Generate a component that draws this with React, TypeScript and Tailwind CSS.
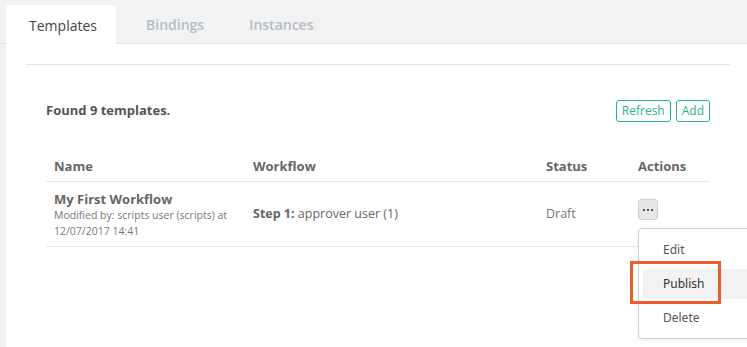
import React from 'react';

const tabs = ['Templates', 'Bindings', 'Instances'];

const App = () => {
  return (
    <div className="relative h-[347px] w-[747px] overflow-hidden bg-[#f2f2f2] font-['Open_Sans',sans-serif]">
      {/* Tab strip */}
      <div className="flex h-[44px] items-end border-b border-[#e2e2e2] pl-[6px]">
        <div className="-mb-px flex h-[39px] w-[110px] items-center justify-center rounded-t-[4px] bg-white pl-[4px] pt-[1px] text-[14px] text-[#444]">
          {tabs[0]}
        </div>
        <div className="flex h-[39px] items-center pl-[30px] pt-[1px] text-[14px] font-semibold text-[#b4bcc8]">{tabs[1]}</div>
        <div className="flex h-[39px] items-center pl-[45px] pt-[1px] text-[14px] font-semibold text-[#b4bcc8]">{tabs[2]}</div>
      </div>

      {/* Panel */}
      <div className="ml-[6px] h-[303px] bg-white pl-[20px] pr-[17px] pt-[20px]">
        <div className="border-t border-[#e3e7ec]" />

        <div className="px-[20px]">
          <div className="mt-[35px] flex items-center justify-between">
            <span className="text-[13px] font-bold text-[#555]">Found 9 templates.</span>
            <div className="flex gap-[5px]">
              <button className="h-[22px] rounded-[3px] border border-[#1fb58f] px-[5px] text-[12px] leading-none text-[#1fb58f]">Refresh</button>
              <button className="h-[22px] rounded-[3px] border border-[#1fb58f] px-[5px] text-[12px] leading-none text-[#1fb58f]">Add</button>
            </div>
          </div>

          {/* Table */}
          <div className="mt-[35px] grid grid-cols-[199px_293px_92px_80px] text-[#666]">
            <div className="border-b border-[#e6e6e6] px-[8px] pb-[4px] text-[13px] font-bold">Name</div>
            <div className="border-b border-[#e6e6e6] px-[8px] pb-[4px] text-[13px] font-bold">Workflow</div>
            <div className="border-b border-[#e6e6e6] px-[8px] pb-[4px] text-[13px] font-bold">Status</div>
            <div className="border-b border-[#e6e6e6] px-[8px] pb-[4px] text-[13px] font-bold">Actions</div>

            <div className="flex h-[65px] flex-col justify-center border-b border-[#e6e6e6] px-[8px] pt-[2px]">
              <div className="text-[13px] font-bold leading-[16px] text-[#666]">My First Workflow</div>
              <div className="text-[10.5px] leading-[16px] text-[#777]">Modified by: scripts user (scripts) at 12/07/2017 14:41</div>
            </div>
            <div className="flex items-center border-b border-[#e6e6e6] px-[8px] pt-[2px] text-[12.5px] text-[#666]">
              <span className="font-bold">Step 1:</span>&nbsp;approver user (1)
            </div>
            <div className="flex items-center border-b border-[#e6e6e6] px-[8px] pt-[2px] text-[12.5px] text-[#777]">Draft</div>
            <div className="flex items-center border-b border-[#e6e6e6] px-[8px]">
              <button className="-mt-[8px] flex h-[21px] w-[20px] items-center justify-center rounded-[3px] border border-[#cfcfcf] bg-[#e6e6e6]">
                <svg width="10" height="4" viewBox="0 0 10 4">
                  <rect x="0" y="1" width="2" height="2" fill="#555" />
                  <rect x="4" y="1" width="2" height="2" fill="#555" />
                  <rect x="8" y="1" width="2" height="2" fill="#555" />
                </svg>
              </button>
            </div>
          </div>
        </div>
      </div>

      {/* Actions menu */}
      <div className="absolute left-[638px] top-[228px] h-[111px] w-[120px] rounded-[4px] border border-[#cfcfcf] bg-white pl-[4px] pt-[6px] font-['Noto_Sans',sans-serif] text-[12px] text-[#555] shadow-[0_2px_4px_rgba(0,0,0,0.06)]">
        <div className="flex h-[30px] items-center pl-[20px]">Edit</div>
        <div className="mt-[4px] flex h-[30px] items-center rounded-[3px] bg-[#f2f2f2] pl-[20px] text-[#333]">Publish</div>
        <div className="mt-[4px] flex h-[30px] items-center pl-[20px]">Delete</div>
      </div>

      {/* Highlight annotation */}
      <div className="absolute left-[630px] top-[261px] h-[43px] w-[91px] border-[3px] border-[#f15a29]" />
    </div>
  );
};

export default App;
